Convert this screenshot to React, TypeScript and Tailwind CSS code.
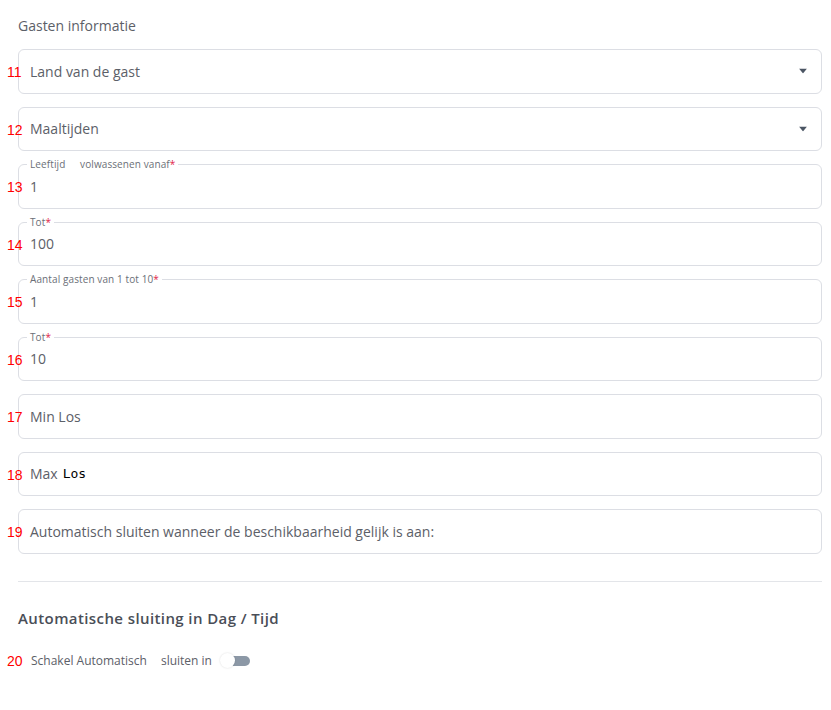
import React from 'react';

const font = { fontFamily: '"Open Sans", "Noto Sans", sans-serif' };

function Num({ n }: { n: number }) {
  return (
    <span className="absolute left-[7px] top-1/2 -translate-y-[6px] text-[14px] leading-none text-[#ff0000] [font-family:'Liberation_Sans',sans-serif]">
      {n}
    </span>
  );
}

function Caret() {
  return (
    <svg width="8" height="5" viewBox="0 0 8 5" className="absolute right-[14px] top-1/2 -translate-y-1/2">
      <path d="M0 0h8L4 5z" fill="#4b5563" />
    </svg>
  );
}

const box =
  'relative ml-[18px] mr-[9px] flex h-[44.5px] items-center rounded-[6px] border border-[#dcdee4] bg-white px-[11px] text-[14px] text-[#5c6068]';

function SelectField({ n, label }: { n: number; label: string }) {
  return (
    <div className="relative">
      <div className={box}>
        {label}
        <Caret />
      </div>
      <Num n={n} />
    </div>
  );
}

function FloatField({ n, label, value }: { n: number; label: React.ReactNode; value: string }) {
  return (
    <div className="relative">
      <div className={box}>
        <span className="absolute -top-[6px] left-[8px] bg-white px-[3px] text-[10px] leading-[11px] tracking-[0.1px] text-[#6b6f77]">
          {label}
          <span className="text-[#e11d48]">*</span>
        </span>
        {value}
      </div>
      <Num n={n} />
    </div>
  );
}

function TextField({ n, children }: { n: number; children: React.ReactNode }) {
  return (
    <div className="relative">
      <div className={box}>{children}</div>
      <Num n={n} />
    </div>
  );
}

export default function App() {
  return (
    <div className="h-[710px] w-[831px] bg-white pt-[17px]" style={font}>
      <h2 className="mx-[18px] mb-[14px] text-[14px] leading-[18px] text-[#5c6068]">Gasten informatie</h2>
      <div className="flex flex-col gap-[13px]">
        <SelectField n={11} label="Land van de gast" />
        <SelectField n={12} label="Maaltijden" />
        <FloatField n={13} label={<>Leeftijd <span className="mx-[6px]"> </span>volwassenen vanaf</>} value="1" />
        <FloatField n={14} label="Tot" value="100" />
        <FloatField n={15} label="Aantal gasten van 1 tot 10" value="1" />
        <FloatField n={16} label="Tot" value="10" />
        <TextField n={17}>Min Los</TextField>
        <TextField n={18}>
          Max<span className="ml-[5px] text-[13px] text-black [font-family:'DejaVu_Sans_Mono',monospace]">Los</span>
        </TextField>
        <TextField n={19}>Automatisch sluiten wanneer de beschikbaarheid gelijk is aan:</TextField>
      </div>
      <div className="ml-[18px] mr-[9px] mt-[27px] border-t border-[#e3e5e9]" />
      <h3 className="mx-[18px] mt-[27px] text-[15px] font-semibold leading-[18px] tracking-[0.4px] text-[#4a4e57]">
        Automatische sluiting in Dag / Tijd
      </h3>
      <div className="relative mt-[25px] flex items-center pl-[31px] text-[12px] text-[#5c6068]">
        <span className="absolute left-[7px] top-1/2 -translate-y-1/2 text-[14px] leading-none text-[#ff0000] [font-family:'Liberation_Sans',sans-serif]">20</span>
        <span>Schakel Automatisch</span>
        <span className="ml-[14px]">sluiten in</span>
        <span className="relative ml-[8px] flex h-[15px] w-[30px] items-center">
          <span className="absolute left-[7px] h-[10px] w-[23px] rounded-full bg-[#8c98a6]" />
          <span className="absolute left-0 h-[15px] w-[15px] rounded-full bg-white shadow-[0_0_2px_rgba(0,0,0,0.15)]" />
        </span>
      </div>
    </div>
  );
}
